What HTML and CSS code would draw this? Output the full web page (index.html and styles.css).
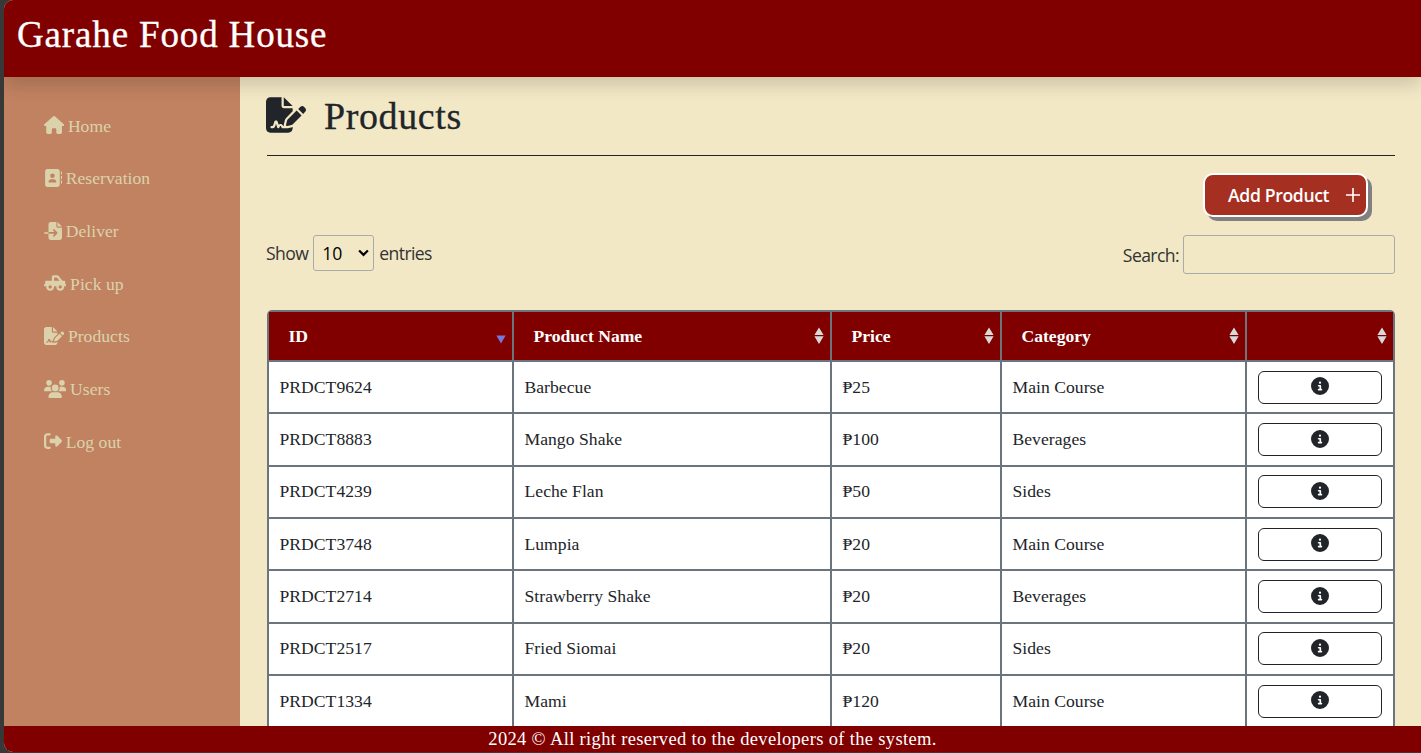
FILE: index.html
```html
<!DOCTYPE html>
<html lang="en">
<head>
<meta charset="utf-8">
<title>Garahe Food House</title>
<link rel="stylesheet" href="styles.css">
</head>
<body>
<svg class="sprite" aria-hidden="true">
<symbol id="house" viewBox="0 0 576 512"><path d="M575.8 255.5c0 18-15 32.1-32 32.1h-32l.7 160.2c0 2.7-.2 5.4-.5 8.1V472c0 22.1-17.9 40-40 40H456c-1.1 0-2.2 0-3.3-.1c-1.4 .1-2.8 .1-4.2 .1H416 392c-22.1 0-40-17.9-40-40V448 384c0-17.7-14.3-32-32-32H256c-17.7 0-32 14.3-32 32v64 24c0 22.1-17.9 40-40 40H160 128.1c-1.5 0-3-.1-4.5-.2c-1.2 .1-2.4 .2-3.6 .2H104c-22.1 0-40-17.9-40-40V360c0-.9 0-1.9 .1-2.8V287.6H32c-18 0-32-14-32-32.1c0-9 3-17 10-24L266.4 8c7-7 15-8 22-8s15 2 21 7L564.8 231.5c8 7 12 15 11 24z"/></symbol>
<symbol id="book" viewBox="0 0 512 512"><path d="M96 0C60.7 0 32 28.7 32 64V448c0 35.3 28.7 64 64 64H384c35.3 0 64-28.7 64-64V64c0-35.3-28.7-64-64-64H96zM208 288h64c44.2 0 80 35.8 80 80c0 8.8-7.2 16-16 16H144c-8.8 0-16-7.2-16-16c0-44.2 35.8-80 80-80zm-32-96a64 64 0 1 1 128 0 64 64 0 1 1 -128 0zM512 80c0-8.8-7.2-16-16-16s-16 7.2-16 16v64c0 8.8 7.2 16 16 16s16-7.2 16-16V80zM496 192c-8.8 0-16 7.2-16 16v64c0 8.8 7.2 16 16 16s16-7.2 16-16V208c0-8.8-7.2-16-16-16zm16 144c0-8.8-7.2-16-16-16s-16 7.2-16 16v64c0 8.8 7.2 16 16 16s16-7.2 16-16V336z"/></symbol>
<symbol id="import" viewBox="0 0 512 512"><path d="M128 64c0-35.3 28.7-64 64-64H352V128c0 17.7 14.3 32 32 32H512V448c0 35.3-28.7 64-64 64H192c-35.3 0-64-28.7-64-64V336H302.1l-39 39c-9.4 9.4-9.4 24.6 0 33.9s24.6 9.4 33.9 0l80-80c9.4-9.4 9.4-24.6 0-33.9l-80-80c-9.4-9.4-24.6-9.4-33.9 0s-9.4 24.6 0 33.9l39 39H128V64zm0 224v48H24c-13.3 0-24-10.7-24-24s10.7-24 24-24H128zM512 128H384V0L512 128z"/></symbol>
<symbol id="pickup" viewBox="0 0 640 512"><path d="M368.6 96l76.8 96H288V96h80.6zM224 80V192H64c-17.7 0-32 14.3-32 32v64c-17.7 0-32 14.3-32 32s14.3 32 32 32H65.1c-.7 5.2-1.1 10.6-1.1 16c0 61.9 50.1 112 112 112s112-50.1 112-112c0-5.4-.4-10.8-1.1-16h66.3c-.7 5.2-1.1 10.6-1.1 16c0 61.9 50.1 112 112 112s112-50.1 112-112c0-5.4-.4-10.8-1.1-16H608c17.7 0 32-14.3 32-32s-14.3-32-32-32V224c0-17.7-14.3-32-32-32H527.4L418.6 56c-12.1-15.2-30.5-24-50-24H272c-26.5 0-48 21.5-48 48zm0 288a48 48 0 1 1 -96 0 48 48 0 1 1 96 0zm288 0a48 48 0 1 1 -96 0 48 48 0 1 1 96 0z"/></symbol>
<symbol id="signature" viewBox="0 0 576 512"><path d="M64 0C28.7 0 0 28.7 0 64V448c0 35.3 28.7 64 64 64H320c35.3 0 64-28.7 64-64V428.7c-2.7 1.1-5.4 2-8.2 2.7l-60.1 15c-3 .7-6 1.2-9 1.4c-.9 .1-1.8 .2-2.7 .2H240c-6.1 0-11.6-3.4-14.3-8.8l-8.8-17.7c-1.7-3.4-5.1-5.5-8.8-5.5s-7.2 2.1-8.8 5.5l-8.8 17.7c-2.9 5.9-9.2 9.4-15.7 8.8s-12.1-5.1-13.9-11.3L144 381l-9.8 32.8c-6.1 20.3-24.8 34.2-46 34.2H80c-8.8 0-16-7.2-16-16s7.2-16 16-16h8.2c7.1 0 13.3-4.6 15.3-11.4l14.9-49.5c3.4-11.3 13.8-19.1 25.6-19.1s22.2 7.7 25.6 19.1l11.6 38.6c7.4-6.2 16.8-9.7 26.8-9.7c15.9 0 30.4 9 37.5 23.2l4.4 8.8h8.9c-3.1-8.8-3.7-18.4-1.4-27.8l15-60.1c2.8-11.3 8.6-21.5 16.8-29.7L384 203.6V160H256c-17.7 0-32-14.3-32-32V0H64zM256 0V128H384L256 0zM549.8 139.7c-15.6-15.6-40.9-15.6-56.6 0l-29.4 29.4 71 71 29.4-29.4c15.6-15.6 15.6-40.9 0-56.6l-14.4-14.4zM311.9 321c-4.1 4.1-7 9.2-8.4 14.9l-15 60.1c-1.4 5.5 .2 11.2 4.2 15.2s9.7 5.6 15.2 4.2l60.1-15c5.6-1.4 10.8-4.3 14.9-8.4L512.1 262.7l-71-71L311.9 321z"/></symbol>
<symbol id="users" viewBox="0 0 640 512"><path d="M144 0a80 80 0 1 1 0 160A80 80 0 1 1 144 0zM512 0a80 80 0 1 1 0 160A80 80 0 1 1 512 0zM0 298.7C0 239.8 47.8 192 106.7 192h42.7c15.9 0 31 3.5 44.6 9.7c-1.3 7.2-1.9 14.7-1.9 22.3c0 38.2 16.8 72.5 43.3 96c-.2 0-.4 0-.7 0H21.3C9.6 320 0 310.4 0 298.7zM405.3 320c-.2 0-.4 0-.7 0c26.6-23.5 43.3-57.8 43.3-96c0-7.6-.7-15-1.9-22.3c13.6-6.3 28.7-9.7 44.6-9.7h42.7C592.2 192 640 239.8 640 298.7c0 11.8-9.6 21.3-21.3 21.3H405.3zM224 224a96 96 0 1 1 192 0 96 96 0 1 1 -192 0zM128 485.3C128 411.7 187.7 352 261.3 352H378.7C452.3 352 512 411.7 512 485.3c0 14.7-11.9 26.7-26.7 26.7H154.7c-14.7 0-26.7-11.9-26.7-26.7z"/></symbol>
<symbol id="logout" viewBox="0 0 512 512"><path d="M377.9 105.9L500.7 228.7c7.2 7.2 11.3 17.1 11.3 27.3s-4.1 20.1-11.3 27.3L377.9 406.1c-6.4 6.4-15 9.9-24 9.9c-18.7 0-33.9-15.2-33.9-33.9l0-62.1-128 0c-17.7 0-32-14.3-32-32l0-64c0-17.7 14.3-32 32-32l128 0 0-62.1c0-18.7 15.2-33.9 33.9-33.9c9 0 17.6 3.6 24 9.9zM160 96L96 96c-17.7 0-32 14.3-32 32l0 256c0 17.7 14.3 32 32 32l64 0c17.7 0 32 14.3 32 32s-14.3 32-32 32l-64 0c-53 0-96-43-96-96L0 128C0 75 43 32 96 32l64 0c17.7 0 32 14.3 32 32s-14.3 32-32 32z"/></symbol>
<symbol id="info" viewBox="0 0 512 512"><path d="M256 512A256 256 0 1 0 256 0a256 256 0 1 0 0 512zM216 336h24V272H216c-13.3 0-24-10.7-24-24s10.7-24 24-24h48c13.3 0 24 10.7 24 24v88h8c13.3 0 24 10.7 24 24s-10.7 24-24 24H216c-13.3 0-24-10.7-24-24s10.7-24 24-24zm40-208a32 32 0 1 1 0 64 32 32 0 1 1 0-64z"/></symbol>
<symbol id="sort" viewBox="0 0 10 18"><path d="M5 .5L9.6 8H.4zM5 17L9.6 9.3H.4z"/></symbol>
</svg>
<div class="app">
<header class="topbar"><h1 class="brand">Garahe Food House</h1></header>
<div class="body">
<nav class="sidebar">
<a class="link"><svg class="ico w576"><use href="#house"/></svg>Home</a>
<a class="link"><svg class="ico"><use href="#book"/></svg>Reservation</a>
<a class="link"><svg class="ico"><use href="#import"/></svg>Deliver</a>
<a class="link"><svg class="ico w640"><use href="#pickup"/></svg>Pick up</a>
<a class="link"><svg class="ico w576"><use href="#signature"/></svg>Products</a>
<a class="link"><svg class="ico w640"><use href="#users"/></svg>Users</a>
<a class="link"><svg class="ico"><use href="#logout"/></svg>Log out</a>
</nav>
<main class="main">
<div class="heading"><svg class="heading-ico"><use href="#signature"/></svg><h2 class="title">Products</h2></div>
<div class="actions"><button class="add"><span>Add Product</span><svg class="plus" viewBox="0 0 16 16"><path d="M8 1v14M1 8h14"/></svg></button></div>
<div class="controls">
<div class="length"><span>Show</span><span class="select">10<svg class="chev" viewBox="0 0 10 7"><path d="M1 1.2L5 5.2L9 1.2"/></svg></span><span>entries</span></div>
<label class="search"><span>Search:</span><input class="search-input" type="text"></label>
</div>
<div class="table">
<div class="th">ID<svg class="desc" viewBox="0 0 10 9"><path d="M.4 .5H9.6L5 8.5z"/></svg></div><div class="th">Product Name<svg class="sort"><use href="#sort"/></svg></div><div class="th">Price<svg class="sort"><use href="#sort"/></svg></div><div class="th">Category<svg class="sort"><use href="#sort"/></svg></div><div class="th"><svg class="sort"><use href="#sort"/></svg></div>
<div class="td">PRDCT9624</div><div class="td">Barbecue</div><div class="td">₱25</div><div class="td">Main Course</div><div class="td"><button class="info"><svg class="info-ico"><use href="#info"/></svg></button></div>
<div class="td">PRDCT8883</div><div class="td">Mango Shake</div><div class="td">₱100</div><div class="td">Beverages</div><div class="td"><button class="info"><svg class="info-ico"><use href="#info"/></svg></button></div>
<div class="td">PRDCT4239</div><div class="td">Leche Flan</div><div class="td">₱50</div><div class="td">Sides</div><div class="td"><button class="info"><svg class="info-ico"><use href="#info"/></svg></button></div>
<div class="td">PRDCT3748</div><div class="td">Lumpia</div><div class="td">₱20</div><div class="td">Main Course</div><div class="td"><button class="info"><svg class="info-ico"><use href="#info"/></svg></button></div>
<div class="td">PRDCT2714</div><div class="td">Strawberry Shake</div><div class="td">₱20</div><div class="td">Beverages</div><div class="td"><button class="info"><svg class="info-ico"><use href="#info"/></svg></button></div>
<div class="td">PRDCT2517</div><div class="td">Fried Siomai</div><div class="td">₱20</div><div class="td">Sides</div><div class="td"><button class="info"><svg class="info-ico"><use href="#info"/></svg></button></div>
<div class="td">PRDCT1334</div><div class="td">Mami</div><div class="td">₱120</div><div class="td">Main Course</div><div class="td"><button class="info"><svg class="info-ico"><use href="#info"/></svg></button></div>
</div>
</main>
</div>
<footer class="footer"><span class="copy">2024 © All right reserved to the developers of the system.</span></footer>
</div>
</body>
</html>
```
FILE: styles.css
```css
* { box-sizing: border-box; }
html, body { margin: 0; height: 100%; }
body {
  background: #383838;
  padding: 0 0 1px 4px;
  overflow: hidden;
  font-family: "Liberation Serif", "Times New Roman", serif;
  font-size: 17.6px;
  color: #212529;
}
.sprite { display: none; }
.app {
  height: 752px;
  display: flex;
  flex-direction: column;
  border-radius: 9px 0 0 9px;
  overflow: hidden;
  background: #f2e8c6;
}
.topbar {
  flex: 0 0 77px;
  background: #800000;
  padding: 14px 13px 0;
  box-shadow: 0 8px 16px rgba(0, 0, 0, .15);
  position: relative;
  z-index: 1;
}
.brand { margin: 0; font-size: 37px; line-height: 42px; font-weight: 400; letter-spacing: .85px; color: #fff; -webkit-text-stroke: .3px #fff; }
.body { flex: 1; min-height: 0; display: flex; }
.sidebar {
  flex: 0 0 236px;
  background: #c08261;
  padding: 22.8px 0 0 39.5px;
  display: flex;
  flex-direction: column;
  color: #dbd2ac;
}
.link { display: flex; align-items: center; gap: 4.2px; height: 52.7px; letter-spacing: .04px; }
.ico { width: 18px; height: 18px; fill: currentColor; position: relative; top: -1px; }
.w576 { width: 20.2px; }
.w640 { width: 22.4px; }
.main { flex: 1; min-width: 0; overflow: hidden; padding: 0 26px 0 27px; }
.heading { height: 79px; border-bottom: 1px solid #212529; display: flex; align-items: center; gap: 18px; }
.heading-ico { width: 40px; height: 36px; fill: #212529; margin: -3px 0 0 -1px; }
.title { margin: 0; font-size: 38px; line-height: 44px; font-weight: 400; letter-spacing: .6px; -webkit-text-stroke: .3px #212529; }
.actions { display: flex; justify-content: flex-end; padding: 17px 27px 0 0; }
.add {
  width: 165px;
  height: 44px;
  border: 2px solid #fff;
  border-radius: 10px;
  background: #a52f20;
  box-shadow: 4px 4px 0 #808080;
  color: #fff;
  font: 600 17.6px "Open Sans", sans-serif;
  display: flex;
  align-items: center;
  justify-content: space-between;
  padding: 0 5px 0 23px;
  letter-spacing: -.35px;
}
.plus { width: 16px; height: 16px; fill: none; stroke: #fff; stroke-width: 1.6; }
.controls { display: flex; justify-content: space-between; align-items: flex-start; padding-top: 18px; height: 93px; font-family: "Open Sans", sans-serif; font-size: 17.6px; color: #333; }
.length, .search { display: flex; align-items: center; gap: 4px; letter-spacing: -.6px; }
.length { gap: 5px; margin-left: -1px; }
.select { width: 61px; height: 36px; border: 1px solid #aaa; border-radius: 3px; padding: 0 4px 0 8px; display: flex; align-items: center; justify-content: space-between; color: #000; letter-spacing: -.2px; }
.chev { width: 11px; height: 8px; fill: none; stroke: #000; stroke-width: 2; }
.search-input { width: 212px; height: 39px; border: 1px solid #aaa; border-radius: 3px; background: transparent; padding: 5px; }
.table {
  display: grid;
  grid-template-columns: 243px 316px 168px 243px 146px;
  grid-template-rows: 48px;
  grid-auto-rows: 50.35px;
  gap: 2px;
  padding: 2px;
  width: 1128px;
  background: #6c757d;
  border-radius: 5px 5px 0 0;
}
.th { background: #800000; color: #fff; font-weight: 700; display: flex; align-items: center; justify-content: space-between; padding: 0 6px 0 19.5px; }
.th:last-child { justify-content: flex-end; }
.sort { width: 10px; height: 18px; fill: #d9d9d9; margin-left: auto; }
.desc { width: 10px; height: 9px; fill: #7878d8; margin-top: 7px; }
.td { background: #fff; display: flex; align-items: center; padding: 0 11px 0 10.5px; letter-spacing: .04px; }
.info { width: 100%; height: 33px; border: 1px solid #212529; border-radius: 6px; background: transparent; display: flex; align-items: center; justify-content: center; padding: 0 0 2px; }
.info-ico { width: 18px; height: 18px; fill: #212529; }
.footer { flex: 0 0 26px; background: #800000; color: #fff; display: flex; justify-content: center; align-items: center; }
.copy { font-size: 18.5px; letter-spacing: .34px; white-space: nowrap; }
```
